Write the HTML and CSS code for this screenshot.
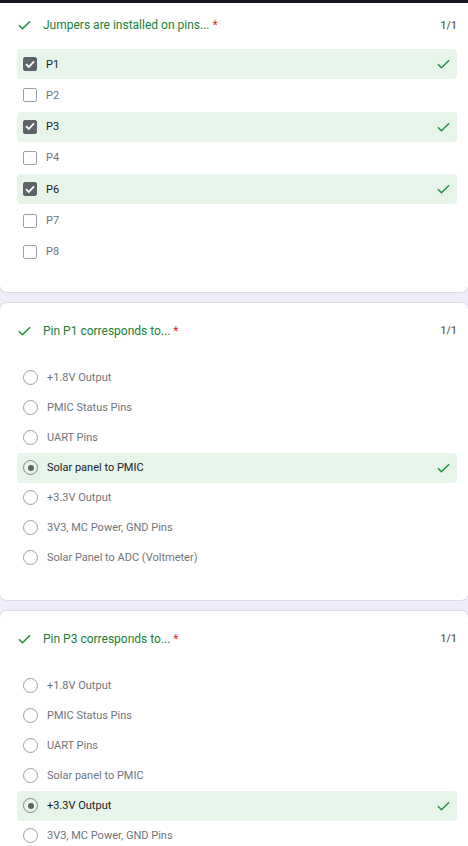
FILE: index.html
```html
<!DOCTYPE html>
<html>
<head>
<meta charset="utf-8">
<link rel="stylesheet" href="styles.css">
</head>
<body>
<div class="topbar"></div>

<div class="card card-first">
  <div class="qhead">
    <svg class="tick" viewBox="0 0 14 10" width="13" height="10"><path d="M1 5.2 L4.8 9 L13 1" fill="none" stroke="#1e8e3e" stroke-width="1.6"/></svg>
    <span class="qtitle">Jumpers are installed on pins... <span class="req">*</span></span>
    <span class="score">1/1</span>
  </div>
  <div class="opts opts-check">
    <div class="opt sel"><span class="cb on"><svg viewBox="0 0 14 14" width="14" height="14"><path d="M3 7.2 L5.8 10 L11 4.3" fill="none" stroke="#fff" stroke-width="1.8"/></svg></span><span class="lbl">P1</span><svg class="rtick" viewBox="0 0 14 10" width="13" height="10"><path d="M1 5.2 L4.8 9 L13 1" fill="none" stroke="#1e8e3e" stroke-width="1.5"/></svg></div>
    <div class="opt"><span class="cb"></span><span class="lbl">P2</span></div>
    <div class="opt sel"><span class="cb on"><svg viewBox="0 0 14 14" width="14" height="14"><path d="M3 7.2 L5.8 10 L11 4.3" fill="none" stroke="#fff" stroke-width="1.8"/></svg></span><span class="lbl">P3</span><svg class="rtick" viewBox="0 0 14 10" width="13" height="10"><path d="M1 5.2 L4.8 9 L13 1" fill="none" stroke="#1e8e3e" stroke-width="1.5"/></svg></div>
    <div class="opt"><span class="cb"></span><span class="lbl">P4</span></div>
    <div class="opt sel"><span class="cb on"><svg viewBox="0 0 14 14" width="14" height="14"><path d="M3 7.2 L5.8 10 L11 4.3" fill="none" stroke="#fff" stroke-width="1.8"/></svg></span><span class="lbl">P6</span><svg class="rtick" viewBox="0 0 14 10" width="13" height="10"><path d="M1 5.2 L4.8 9 L13 1" fill="none" stroke="#1e8e3e" stroke-width="1.5"/></svg></div>
    <div class="opt"><span class="cb"></span><span class="lbl">P7</span></div>
    <div class="opt"><span class="cb"></span><span class="lbl">P8</span></div>
  </div>
</div>

<div class="card">
  <div class="qhead">
    <svg class="tick" viewBox="0 0 14 10" width="13" height="10"><path d="M1 5.2 L4.8 9 L13 1" fill="none" stroke="#1e8e3e" stroke-width="1.6"/></svg>
    <span class="qtitle">Pin P1 corresponds to... <span class="req">*</span></span>
    <span class="score">1/1</span>
  </div>
  <div class="opts opts-radio">
    <div class="opt"><span class="rb"></span><span class="lbl">+1.8V Output</span></div>
    <div class="opt"><span class="rb"></span><span class="lbl">PMIC Status Pins</span></div>
    <div class="opt"><span class="rb"></span><span class="lbl">UART Pins</span></div>
    <div class="opt sel"><span class="rb on"></span><span class="lbl">Solar panel to PMIC</span><svg class="rtick" viewBox="0 0 14 10" width="13" height="10"><path d="M1 5.2 L4.8 9 L13 1" fill="none" stroke="#1e8e3e" stroke-width="1.5"/></svg></div>
    <div class="opt"><span class="rb"></span><span class="lbl">+3.3V Output</span></div>
    <div class="opt"><span class="rb"></span><span class="lbl">3V3, MC Power, GND Pins</span></div>
    <div class="opt"><span class="rb"></span><span class="lbl">Solar Panel to ADC (Voltmeter)</span></div>
  </div>
</div>

<div class="card">
  <div class="qhead">
    <svg class="tick" viewBox="0 0 14 10" width="13" height="10"><path d="M1 5.2 L4.8 9 L13 1" fill="none" stroke="#1e8e3e" stroke-width="1.6"/></svg>
    <span class="qtitle">Pin P3 corresponds to... <span class="req">*</span></span>
    <span class="score">1/1</span>
  </div>
  <div class="opts opts-radio">
    <div class="opt"><span class="rb"></span><span class="lbl">+1.8V Output</span></div>
    <div class="opt"><span class="rb"></span><span class="lbl">PMIC Status Pins</span></div>
    <div class="opt"><span class="rb"></span><span class="lbl">UART Pins</span></div>
    <div class="opt"><span class="rb"></span><span class="lbl">Solar panel to PMIC</span></div>
    <div class="opt sel"><span class="rb on"></span><span class="lbl">+3.3V Output</span><svg class="rtick" viewBox="0 0 14 10" width="13" height="10"><path d="M1 5.2 L4.8 9 L13 1" fill="none" stroke="#1e8e3e" stroke-width="1.5"/></svg></div>
    <div class="opt"><span class="rb"></span><span class="lbl">3V3, MC Power, GND Pins</span></div>
    <div class="opt"><span class="rb"></span><span class="lbl">Solar Panel to ADC (Voltmeter)</span></div>
  </div>
</div>
</body>
</html>
```

FILE: styles.css
```css
html, body {
  margin: 0;
  padding: 0;
}
body {
  background: #f0ebf8;
  font-family: Roboto, "Noto Sans", Arial, sans-serif;
  width: 468px;
  overflow: hidden;
}
.topbar {
  height: 3px;
  background: #15141b;
}
.card {
  background: #fff;
  border: 1px solid #dadce0;
  border-radius: 8px;
  margin: 0 -1px 9px -1px;
  padding: 20px 0 27px 0;
}
.card-first {
  border-top: none;
  border-radius: 0 0 8px 8px;
  padding: 14px 0 25px 0;
}
.qhead {
  display: flex;
  align-items: center;
  height: 16px;
  padding: 0 11px 0 18px;
}
.tick {
  flex: none;
  margin-right: 12px;
}
.qtitle {
  flex: 1;
  font-size: 12px;
  color: #188038;
}
.req {
  color: #d93025;
}
.score {
  font-size: 11px;
  font-weight: 500;
  color: #5f6368;
}
.opts {
  display: flex;
  flex-direction: column;
  margin: 0 11px 0 17px;
}
.opts-check {
  margin-top: 16px;
  gap: 1.33px;
}
.opts-radio {
  margin-top: 24px;
}
.opt {
  display: flex;
  align-items: center;
  height: 30px;
  padding: 0 7px 0 6px;
  border-radius: 4px;
}
.opt.sel {
  background: #e6f4ea;
}
.lbl {
  flex: 1;
  font-size: 11px;
  color: #70757a;
}
.opt.sel .lbl {
  color: #202124;
}
.cb {
  flex: none;
  box-sizing: border-box;
  width: 14px;
  height: 14px;
  border: 1.5px solid #9aa0a6;
  border-radius: 2px;
  margin-right: 9px;
  display: flex;
}
.cb.on {
  background: #5f6368;
  border-color: #5f6368;
}
.cb.on svg {
  margin: -1.5px;
}
.rb {
  flex: none;
  box-sizing: border-box;
  width: 15px;
  height: 15px;
  border: 1.5px solid #9aa0a6;
  border-radius: 50%;
  margin-right: 9px;
  display: flex;
  align-items: center;
  justify-content: center;
}
.rb.on {
  border-color: #80868b;
}
.rb.on::after {
  content: "";
  width: 6px;
  height: 6px;
  border-radius: 50%;
  background: #5f6368;
}
.rtick {
  flex: none;
}
```
